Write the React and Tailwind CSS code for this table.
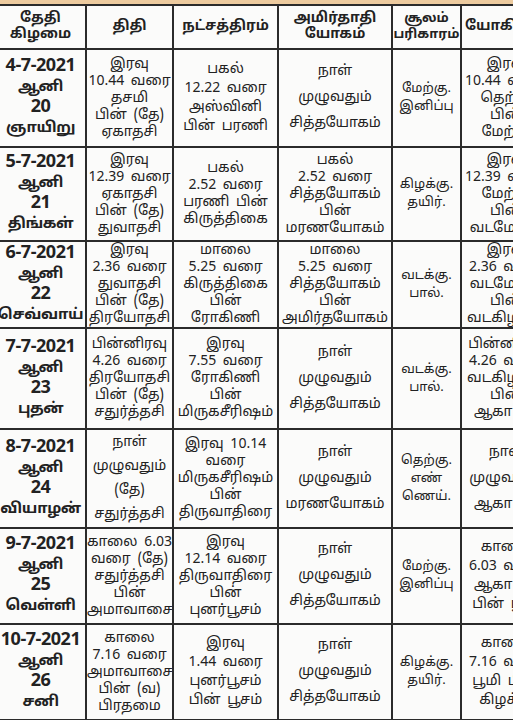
import React from "react";

const rows = [
  {
    date: ["4-7-2021", "ஆனி", "20", "ஞாயிறு"],
    thithi: ["இரவு", "10.44 வரை", "தசமி", "பின் (தே)", "ஏகாதசி"],
    star: ["பகல்", "12.22 வரை", "அஸ்வினி", "பின் பரணி"],
    yogam: ["நாள்", "முழுவதும்", "சித்தயோகம்"],
    soolam: ["மேற்கு.", "இனிப்பு"],
    yogini: ["இரவு", "10.44 வரை", "தெற்கு", "பின்", "மேற்கு"],
    h: "h-[98px]",
  },
  {
    date: ["5-7-2021", "ஆனி", "21", "திங்கள்"],
    thithi: ["இரவு", "12.39 வரை", "ஏகாதசி", "பின் (தே)", "துவாதசி"],
    star: ["பகல்", "2.52 வரை", "பரணி பின்", "கிருத்திகை"],
    starTight: true,
    yogam: ["பகல்", "2.52 வரை", "சித்தயோகம்", "பின்", "மரணயோகம்"],
    soolam: ["கிழக்கு.", "தயிர்."],
    yogini: ["இரவு", "12.39 வரை", "மேற்கு", "பின்", "வடமேற்கு"],
    h: "h-[94px]",
  },
  {
    date: ["6-7-2021", "ஆனி", "22", "செவ்வாய்"],
    thithi: ["இரவு", "2.36 வரை", "துவாதசி", "பின் (தே)", "திரயோதசி"],
    star: ["மாலை", "5.25 வரை", "கிருத்திகை", "பின்", "ரோகிணி"],
    yogam: ["மாலை", "5.25 வரை", "சித்தயோகம்", "பின்", "அமிர்தயோகம்"],
    soolam: ["வடக்கு.", "பால்."],
    yogini: ["இரவு", "2.36 வரை", "வடமேற்கு", "பின்", "வடகிழக்கு"],
    h: "h-[87px]",
  },
  {
    date: ["7-7-2021", "ஆனி", "23", "புதன்"],
    thithi: ["பின்னிரவு", "4.26 வரை", "திரயோதசி", "பின் (தே)", "சதுர்த்தசி"],
    star: ["இரவு", "7.55 வரை", "ரோகிணி", "பின்", "மிருகசீரிஷம்"],
    yogam: ["நாள்", "முழுவதும்", "சித்தயோகம்"],
    soolam: ["வடக்கு.", "பால்."],
    yogini: ["பின்னிரவு", "4.26 வரை", "வடகிழக்கு", "பின்", "ஆகாயம்"],
    h: "h-[101px]",
  },
  {
    date: ["8-7-2021", "ஆனி", "24", "வியாழன்"],
    thithi: ["நாள்", "முழுவதும்", "(தே)", "சதுர்த்தசி"],
    thithiWide: true,
    star: ["இரவு 10.14", "வரை", "மிருகசீரிஷம்", "பின்", "திருவாதிரை"],
    yogam: ["நாள்", "முழுவதும்", "மரணயோகம்"],
    soolam: ["தெற்கு.", "எண்", "ணெய்."],
    yogini: ["நாள்", "முழுவதும்", "ஆகாயம்"],
    h: "h-[99px]",
  },
  {
    date: ["9-7-2021", "ஆனி", "25", "வெள்ளி"],
    thithi: ["காலை 6.03", "வரை (தே)", "சதுர்த்தசி", "பின்", "அமாவாசை"],
    star: ["இரவு", "12.14 வரை", "திருவாதிரை", "பின்", "புனர்பூசம்"],
    yogam: ["நாள்", "முழுவதும்", "சித்தயோகம்"],
    soolam: ["மேற்கு.", "இனிப்பு"],
    yogini: ["காலை", "6.03 வரை", "ஆகாயம்", "பின் பூமி"],
    h: "h-[96px]",
  },
  {
    date: ["10-7-2021", "ஆனி", "26", "சனி"],
    thithi: ["காலை", "7.16 வரை", "அமாவாசை", "பின் (வ)", "பிரதமை"],
    star: ["இரவு", "1.44 வரை", "புனர்பூசம்", "பின் பூசம்"],
    yogam: ["நாள்", "முழுவதும்", "சித்தயோகம்"],
    soolam: ["கிழக்கு.", "தயிர்."],
    yogini: ["காலை", "7.16 வரை", "பூமி பின்", "கிழக்கு"],
    h: "h-[96px]",
  },
];

const tamil = "font-['Noto_Sans_Tamil','Lohit_Tamil','Noto_Sans',sans-serif]";

// 3-line cells are spread out, 4-line cells a little, 5-line cells packed
const leadingFor = (lines, wide, tight) => {
  if (lines.length <= 3) return "leading-[26px]";
  if (wide) return "leading-[24px]";
  if (lines.length === 4 && !tight) return "leading-[19px]";
  return "leading-[17px]";
};

const Lines = ({ lines, wide, tight }) => (
  <div className={`${leadingFor(lines, wide, tight)} [word-spacing:3px]`}>
    {lines.map((l, i) => (
      <div key={i} className="whitespace-nowrap">
        {l}
      </div>
    ))}
  </div>
);

const cell = "border-2 border-[#2b2b2b] text-center align-middle p-0 overflow-hidden";

export default function App() {
  return (
    <div className={`w-[513px] h-[720px] overflow-hidden bg-[#fbfbfa] text-[#222] ${tamil}`}>
      <div className="h-[4px] bg-[#edcb9f]" />
      <table className="-ml-[6px] table-fixed border-collapse w-[586px]">
        <colgroup>
          <col className="w-[91px]" />
          <col className="w-[87px]" />
          <col className="w-[105px]" />
          <col className="w-[114px]" />
          <col className="w-[69px]" />
          <col className="w-[120px]" />
        </colgroup>
        <thead>
          <tr className="h-[44px] font-bold text-[14px] leading-[16px]">
            <th className={cell}>
              <div>தேதி</div>
              <div>கிழமை</div>
            </th>
            <th className={cell}>திதி</th>
            <th className={cell}>நட்சத்திரம்</th>
            <th className={cell}>
              <div>அமிர்தாதி</div>
              <div>யோகம்</div>
            </th>
            <th className={`${cell} text-[13px]`}>
              <div>சூலம்</div>
              <div>பரிகாரம்</div>
            </th>
            <th className={`${cell} text-left pl-[3px] whitespace-nowrap`}>யோகினி</th>
          </tr>
        </thead>
        <tbody>
          {rows.map((r) => (
            <tr key={r.date[0]} className={r.h}>
              <td className={cell}>
                <div className="font-bold text-[18px] leading-[20px] tracking-tight">
                  {r.date.map((l, i) => (
                    <div key={i} className={i === 1 || i === 3 ? "text-[15px] leading-[21px]" : ""}>
                      {l}
                    </div>
                  ))}
                </div>
              </td>
              <td className={`${cell} text-[14px]`}>
                <Lines lines={r.thithi} wide={r.thithiWide} />
              </td>
              <td className={`${cell} text-[14px]`}>
                <Lines lines={r.star} tight={r.starTight} />
              </td>
              <td className={`${cell} text-[14px]`}>
                <Lines lines={r.yogam} />
              </td>
              <td className={`${cell} text-[13px]`}>
                <div className="leading-[18px]">
                  {r.soolam.map((l, i) => (
                    <div key={i}>{l}</div>
                  ))}
                </div>
              </td>
              <td className={`${cell} text-[14px] text-left pl-[1px]`}>
                <div className="w-[86px] text-center">
                  <Lines lines={r.yogini} wide={r.yogini.length === 3} />
                </div>
              </td>
            </tr>
          ))}
        </tbody>
      </table>
    </div>
  );
}
